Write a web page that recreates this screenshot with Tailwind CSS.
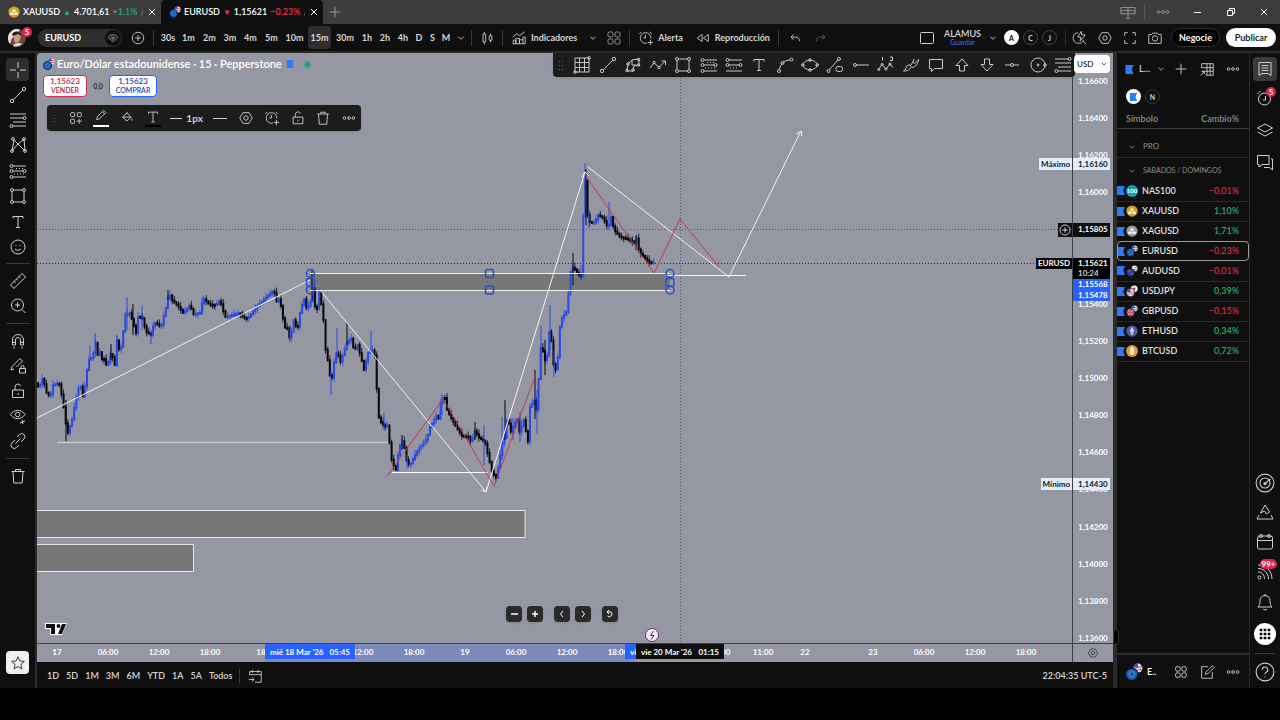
<!DOCTYPE html>
<html lang="es">
<head>
  <meta charset="UTF-8" />
  <meta name="viewport" content="width=device-width, initial-scale=1.0"/>
  <title>EURUSD 1,15621 −0.23% / ALAMUS</title>
  <script src="https://cdn.jsdelivr.net/npm/@tailwindcss/browser@4"></script>
</head>
<body class="bg-black text-[#d6d6d6] h-screen flex flex-col overflow-hidden font-['Lato','Noto_Sans',sans-serif] text-[9px] leading-3">

  <!-- icon set -->
  <svg class="hidden" fill="none">
    <symbol id="cross" viewBox="0 0 18 18"><path d="M9 1v6M9 11v6M1 9h6M11 9h6"/></symbol>
    <symbol id="line" viewBox="0 0 18 18"><circle cx="3" cy="15" r="1.7"/><circle cx="15" cy="3" r="1.7"/><path d="M4.2 13.8 13.8 4.2"/></symbol>
    <symbol id="fib" viewBox="0 0 18 18"><path d="M1 3h16M1 7h13M4 11h13M4 15h13"/><circle cx="15.5" cy="7" r="1.5"/><circle cx="2.5" cy="15" r="1.5"/></symbol>
    <symbol id="pattern" viewBox="0 0 18 18"><path d="M3 15 5 4l4 4 6-5 1 12-7-7-6 7"/><circle cx="3" cy="15" r="1.4"/><circle cx="4" cy="3" r="1.4"/><circle cx="15" cy="3" r="1.4"/><circle cx="16" cy="15" r="1.4"/></symbol>
    <symbol id="forecast" viewBox="0 0 18 18"><path d="M4 4h13M4 9h10M4 15h13"/><path d="M5 12h11M7 6.500h8" stroke-dasharray="1 2"/><circle cx="2.500" cy="4" r="1.500"/><circle cx="2.500" cy="9" r="1.500"/><circle cx="15.500" cy="9" r="1.500"/><circle cx="2.500" cy="15" r="1.500"/></symbol>
    <symbol id="short" viewBox="0 0 18 18"><path d="M4 4h13M4 9h10M1 15h16"/><path d="M5 12h8" stroke-dasharray="1 2"/><circle cx="2.500" cy="4" r="1.500"/><circle cx="2.500" cy="9" r="1.500"/><circle cx="15.500" cy="9" r="1.500"/></symbol>
    <symbol id="rect" viewBox="0 0 18 18"><path d="M4.500 3h9M4.500 15h9M3 4.500v9M15 4.500v9"/><circle cx="3" cy="3" r="1.500"/><circle cx="15" cy="3" r="1.500"/><circle cx="3" cy="15" r="1.500"/><circle cx="15" cy="15" r="1.500"/></symbol>
    <symbol id="text" viewBox="0 0 18 18"><path d="M4 5.500V3.500h10v2M9 3.500v11M7 14.500h4"/></symbol>
    <symbol id="smile" viewBox="0 0 18 18"><circle cx="9" cy="9" r="7"/><path d="M6.500 7.500h1M10.500 7.500h1M6 11c1.500 1.600 4.500 1.600 6 0"/></symbol>
    <symbol id="ruler" viewBox="0 0 18 18"><path d="m1.500 13 11.500-11.500 3.500 3.500L5 16.500zM5 9.500l1.500 1.500M7.500 7 9 8.500M10 4.500l1.500 1.500"/></symbol>
    <symbol id="zoomin" viewBox="0 0 18 18"><circle cx="8.500" cy="8" r="6"/><path d="m13 12.500 3.500 3.500M8.500 5.500v5M6 8h5"/></symbol>
    <symbol id="magnet" viewBox="0 0 18 18"><path d="M3.500 13V8a5.500 5.500 0 0 1 11 0v5h-3V8a2.500 2.500 0 0 0-5 0v5zM3.500 10.500h3M11.500 10.500h3M5 14.500v2M13 14.500v2"/></symbol>
    <symbol id="penlock" viewBox="0 0 18 18"><path d="m2 13 1-3.500 8-8 2.500 2.500-6 6M2 13l3-1M10.500 11.500h6v4.500h-6zM12 11.500V10a1.500 1.500 0 0 1 3 0v1.500"/></symbol>
    <symbol id="lock" viewBox="0 0 18 18"><path d="M3.500 8h11v7.500h-11zM6 8V5a3 3 0 0 1 5.800-1M9 11v2"/></symbol>
    <symbol id="eye" viewBox="0 0 18 18"><path d="M1.500 7.500c3.500-5.500 11-5.500 14.500 0-3.500 5.500-11 5.500-14.500 0zM11 16l5-2M13 13l1 4"/><circle cx="8.700" cy="7.500" r="2.300"/></symbol>
    <symbol id="link" viewBox="0 0 18 18"><path d="m8 5 2.500-2.500a3 3 0 0 1 4.500 4.500l-3 3M10 13l-2.500 2.500a3 3 0 0 1-4.500-4.500l3-3M6.500 11.500l5-5"/></symbol>
    <symbol id="trash" viewBox="0 0 18 18"><path d="M2.500 4.500h13M6.500 4.500v-2h5v2M4 4.500l.8 11.500h8.400L14 4.500"/></symbol>
    <symbol id="star" viewBox="0 0 18 18"><path d="m9 2 2.100 4.700 5 .5-3.800 3.400 1.200 5L9 13l-4.500 2.600 1.200-5L1.900 7.200l5-.5z"/></symbol>
    <symbol id="plus" viewBox="0 0 18 18"><path d="M9 3v12M3 9h12"/></symbol>
    <symbol id="pluscircle" viewBox="0 0 18 18"><circle cx="9" cy="9" r="6.500"/><path d="M9 5.500v7M5.500 9h7"/></symbol>
    <symbol id="chev" viewBox="0 0 18 18"><path d="m6 7.500 3 3 3-3"/></symbol>
    <symbol id="candles" viewBox="0 0 18 18"><path d="M4.500 4.500h3v9h-3zM6 2v2.500M6 13.500V16M11.500 6.500h3v5h-3zM13 4v2.500M13 11.500V14"/></symbol>
    <symbol id="indicators" viewBox="0 0 18 18"><path d="M2.500 15.500v-4h3v4M5.500 15.500v-6h4v6M9.500 15.500V11h4v4.500M13.500 11V8h2.500v7.500h-14M2 8l4.500-4 3 2.500L15.500 2"/></symbol>
    <symbol id="grid4" viewBox="0 0 18 18"><rect x="3" y="3" width="5" height="5" rx="1.500"/><rect x="10" y="3" width="5" height="5" rx="1.500"/><rect x="3" y="10" width="5" height="5" rx="1.500"/><rect x="10" y="10" width="5" height="5" rx="1.500"/></symbol>
    <symbol id="template" viewBox="0 0 18 18"><rect x="3" y="3" width="4.500" height="4.500" rx="1"/><rect x="10.500" y="3" width="4.500" height="4.500" rx="1"/><rect x="3" y="10.500" width="4.500" height="4.500" rx="1"/><path d="M12.500 10v5.500M10 12.500h5.500"/></symbol>
    <symbol id="alert" viewBox="0 0 18 18"><path d="M10 14.800A6 6 0 1 1 14.500 9.500M8.500 5.500V9H6M1.500 4.500l2.500-2.500M13 2l2.500 2.500M14 11v6M11 14h6"/></symbol>
    <symbol id="rewind" viewBox="0 0 18 18"><path d="M8 5v8L2.500 9zM15 5v8L9.500 9z"/></symbol>
    <symbol id="undo" viewBox="0 0 18 18"><path d="M7.500 5 4.500 8l3 3M4.500 8h6c2 0 3.500 1.500 3.500 4.500"/></symbol>
    <symbol id="redo" viewBox="0 0 18 18"><path d="m10.500 5 3 3-3 3M13.500 8h-6C5.500 8 4 9.500 4 12.500"/></symbol>
    <symbol id="window" viewBox="0 0 18 18"><rect x="2.500" y="3.500" width="13" height="11" rx="1"/></symbol>
    <symbol id="bolt" viewBox="0 0 18 18"><path d="M7 3a6 6 0 1 0 6 8M12.500 12.500 16 16M10.500 1.500 6.500 8h3.500l-1 4.500 6-7h-4z"/></symbol>
    <symbol id="hex" viewBox="0 0 18 18"><path d="M5.500 3h7L16 9l-3.500 6h-7L2 9z"/><circle cx="9" cy="9" r="2.500"/></symbol>
    <symbol id="full" viewBox="0 0 18 18"><path d="M3 6.500V3h3.500M11.500 3H15v3.500M15 11.500V15h-3.500M6.500 15H3v-3.500"/></symbol>
    <symbol id="camera" viewBox="0 0 18 18"><path d="M2 5h3.500l1-1.500h5l1 1.500H16v10H2z"/><circle cx="9" cy="9.500" r="3"/></symbol>
    <symbol id="dots" viewBox="0 0 18 18"><circle cx="4" cy="9" r="1.500"/><circle cx="9" cy="9" r="1.500"/><circle cx="14" cy="9" r="1.500"/></symbol>
    <symbol id="grip" viewBox="0 0 10 18"><path d="M3.500 5v9M6.500 5v9" stroke-dasharray="1 3"/></symbol>
    <symbol id="pencil" viewBox="0 0 18 18"><path d="m4 12 1-3.500 7-7L14.500 4l-7 7zM10.500 3 13 5.500"/></symbol>
    <symbol id="bucket" viewBox="0 0 18 18"><path d="m4 8 5-4.500 4.500 4.500-4.500 4.500zM9 3.500V2M4 8h9.500M14.500 9.500v2.500"/></symbol>
    <symbol id="gridtable" viewBox="0 0 18 18"><path d="M2 2h14v14H2zM6.500 2v14M11.500 2v14M2 6.500h14M2 11.500h14"/><circle cx="2" cy="16" r="1.300"/><circle cx="16" cy="2" r="1.300"/></symbol>
    <symbol id="brushshape" viewBox="0 0 18 18"><path d="M3 15 4 8l4-4 7-1v6l-5 1-1 5zM8 4v5h4"/><circle cx="3" cy="14.500" r="1.300"/><circle cx="4" cy="8" r="1.300"/><circle cx="14.500" cy="3.500" r="1.300"/><circle cx="9" cy="14" r="1.300"/><circle cx="14.500" cy="9" r="1.300"/></symbol>
    <symbol id="zigzag" viewBox="0 0 18 18"><path d="m1 12 4-5 5 4 6.500-6M12.500 5h4v4"/><circle cx="5" cy="6.500" r="1.200"/><circle cx="10" cy="11.500" r="1.200"/></symbol>
    <symbol id="curve" viewBox="0 0 18 18"><path d="M3.500 13.500C4.500 7.500 8 4.500 14 4"/><circle cx="3" cy="15" r="1.500"/><circle cx="6.500" cy="7" r="1.500"/><circle cx="15.500" cy="3.500" r="1.500"/></symbol>
    <symbol id="ellipse" viewBox="0 0 18 18"><ellipse cx="9" cy="9" rx="7" ry="4.800"/><circle cx="1.800" cy="9" r="1.300"/><circle cx="16.200" cy="9" r="1.300"/><circle cx="9" cy="4" r="1.300"/><circle cx="9" cy="14" r="1.300"/></symbol>
    <symbol id="linelock" viewBox="0 0 18 18"><path d="M3 14 12 4"/><circle cx="2.500" cy="15" r="1.500"/><circle cx="13" cy="3" r="1.500"/><rect x="10" y="10.500" width="6.500" height="5" rx="2"/></symbol>
    <symbol id="ray" viewBox="0 0 18 18"><circle cx="3" cy="9" r="1.500"/><path d="M4.500 9H17"/></symbol>
    <symbol id="elliott" viewBox="0 0 18 18"><path d="m1.500 13.500 3.500-5 4 4.500 4-5 3 3.500M5.500 1v3.500M13 1h2.500v3.500H13"/><circle cx="1.800" cy="13.500" r="1.100"/><circle cx="5.200" cy="8.500" r="1.100"/><circle cx="9" cy="13" r="1.100"/><circle cx="13" cy="8" r="1.100"/></symbol>
    <symbol id="brush" viewBox="0 0 18 18"><path d="M1.500 15c3 0 1.500-6 5.500-6 4 0 2.500 6-5.500 6zM8.500 9.500 11 6c1 2 3 1.500 5.500-2.500M10 11.500c3.500-.5 6-3.500 6.500-8M11 6l1-3"/></symbol>
    <symbol id="callout" viewBox="0 0 18 18"><path d="M2.500 3.500h13v9h-8l-3 3v-3h-2z"/></symbol>
    <symbol id="up" viewBox="0 0 18 18"><path d="m9 3 6 6.500h-3.500V15h-5V9.500H3z"/></symbol>
    <symbol id="down" viewBox="0 0 18 18"><path d="m9 15 6-6.500h-3.500V3h-5v5.500H3z"/></symbol>
    <symbol id="hline" viewBox="0 0 18 18"><circle cx="9" cy="9" r="1.500"/><path d="M2 9h5.500M10.500 9H16"/></symbol>
    <symbol id="circle" viewBox="0 0 18 18"><circle cx="9" cy="9" r="7"/><circle cx="9" cy="9" r="1"/><circle cx="16" cy="9" r="1.300"/></symbol>
    <symbol id="fibx" viewBox="0 0 18 18"><path d="M1 3h13M1 7h16M4 11h13M4 15h13"/><circle cx="15.500" cy="3" r="1.500"/><circle cx="2.500" cy="15" r="1.500"/></symbol>
    <symbol id="list" viewBox="0 0 18 18"><path d="M3 2.500h12v13l-3-2H6l-3 2zM5.500 5.500h7M5.500 8h7M5.500 10.500h7"/></symbol>
    <symbol id="clock" viewBox="0 0 18 18"><circle cx="8.500" cy="10" r="6"/><path d="M9.500 7v4H7M1.500 5l3-3"/></symbol>
    <symbol id="layers" viewBox="0 0 18 18"><path d="m9 3 7.500 4L9 11 1.500 7zM1.500 11 9 15l7.500-4"/></symbol>
    <symbol id="chat" viewBox="0 0 18 18"><path d="M1.500 2.500h11.500v9H6l-3 2.500v-2.500H1.500zM15 6h1.500v11l-3-2.500H8"/></symbol>
    <symbol id="radar" viewBox="0 0 18 18"><circle cx="9" cy="9" r="8"/><circle cx="9" cy="9" r="4.500"/><path d="m8.500 10 5.500-5"/><circle cx="9" cy="9.500" r="1"/></symbol>
    <symbol id="peak" viewBox="0 0 18 18"><path d="m9 2 4.500 7-3 2-2-3-4 2zM3 12l-2 4h16l-2-4"/></symbol>
    <symbol id="calendar" viewBox="0 0 18 18"><rect x="1.500" y="3" width="15" height="13" rx="2"/><path d="M1.500 7.500h15"/><circle cx="5" cy="3" r="1.500"/><circle cx="13" cy="3" r="1.500"/></symbol>
    <symbol id="feed" viewBox="0 0 18 18"><circle cx="3.500" cy="14.500" r="1.500"/><path d="M2 9c4 0 6.500 3 6.500 7M2 5.500c6 0 10.500 4.500 10.500 10.500M2 2c8 0 14 6 14 14"/></symbol>
    <symbol id="bell" viewBox="0 0 18 18"><path d="M2 14c1.500-1.500 2-3 2-6.500a5 5 0 0 1 10 0c0 3.500.5 5 2 6.500zM7 16c1 1.200 3 1.200 4 0M9 2.500V1"/></symbol>
    <symbol id="apps" viewBox="0 0 18 18"><path d="M3 3h3v3H3zM7.500 3h3v3h-3zM12 3h3v3h-3zM3 7.500h3v3H3zM7.500 7.500h3v3h-3zM12 7.500h3v3h-3zM3 12h3v3H3zM7.500 12h3v3h-3zM12 12h3v3h-3z" fill="currentColor" stroke="none"/></symbol>
    <symbol id="help" viewBox="0 0 18 18"><circle cx="9" cy="9" r="8"/><path d="M6.500 7a2.500 2.500 0 1 1 3.500 2.300c-.8.400-1 .8-1 1.700M9 13v1"/></symbol>
    <symbol id="goto" viewBox="0 0 18 18"><path d="M3 8V4h13v12H9M3 7.500h13M6 2v3.500M12.500 2v3.500M2 13h6M5.500 10.500 8 13l-2.500 2.500"/></symbol>
    <symbol id="tablein" viewBox="0 0 18 18"><path d="M3 8V3h13v13H8M3 7.500h13M9 3v13M12.500 3v13M3 11.500h13M2 16l4-4M3 12h3v3"/></symbol>
    <symbol id="edit" viewBox="0 0 18 18"><path d="M10 3H3v13h12V9M7 11.500 8 9l7-7 2 2-7 7z"/></symbol>
    <symbol id="flag" viewBox="0 0 9 10"><path d="M0 0h9L7 5l2 5H0z" fill="#2f7bf5" stroke="none"/></symbol>
    <symbol id="gem" viewBox="0 0 18 18"><path d="M5 4.500h8l3 3.500-7 6.500L2 8zM6.500 8h5L9 11.500z"/></symbol>
    <symbol id="monitor" viewBox="0 0 18 18"><path d="M1 4h16v7H1zM1 7.500h16M9 4v12M6 16h6"/></symbol>
    <symbol id="eu" viewBox="0 0 16 16"><circle cx="11.500" cy="4.500" r="4" fill="#e6e6ee" stroke="none"/><path d="M11 3.500h4.500M11 6h4.500" stroke="#d33a55"/><path d="M7.500 4a4 4 0 0 1 4-3.500v4z" fill="#3752b5" stroke="none"/><circle cx="6" cy="10" r="5.500" fill="#1a5fb4" stroke="#101010"/><circle cx="6" cy="10" r="2.500" fill="none" stroke="#6fb1e8" stroke-dasharray="1 1"/></symbol>
    <symbol id="au" viewBox="0 0 16 16"><circle cx="11.500" cy="4.500" r="4" fill="#e6e6ee" stroke="none"/><path d="M11 3.500h4.500M11 6h4.500" stroke="#d33a55"/><circle cx="6" cy="10" r="5.500" fill="#243c9a" stroke="#101010"/><path d="M2 8h5M4.500 6v5" stroke="#e8455a"/><circle cx="8" cy="12" r=".8" fill="#fff" stroke="none"/></symbol>
    <symbol id="jp" viewBox="0 0 16 16"><circle cx="11" cy="5" r="4.500" fill="#f4f4f4" stroke="none"/><circle cx="11" cy="5" r="1.600" fill="#d7263d" stroke="none"/><circle cx="6" cy="10" r="5.500" fill="#ececf2" stroke="#101010"/><path d="M3 9.500h8M2 12h9" stroke="#d33a55"/><path d="M1 9.500a5 5 0 0 1 5-4.500v4.500z" fill="#3752b5" stroke="none"/></symbol>
    <symbol id="gb" viewBox="0 0 16 16"><circle cx="11.500" cy="4.500" r="4" fill="#e6e6ee" stroke="none"/><path d="M11 3.500h4.500M11 6h4.500" stroke="#d33a55"/><path d="M7.500 4a4 4 0 0 1 4-3.500v4z" fill="#3752b5" stroke="none"/><circle cx="6" cy="10" r="5.500" fill="#5f6fb0" stroke="#101010"/><path d="m2.500 6.500 7 7M9.500 6.500l-7 7" stroke="#e8e8f0"/><path d="M6 5v10M1 10h10" stroke="#e8455a" stroke-width="1.500"/></symbol>
    <symbol id="gold" viewBox="0 0 16 16"><circle cx="8" cy="8" r="7.500" fill="#d3a020" stroke="none"/><path d="M6.500 4.500h3l1 3h-5zM3.500 8.500h3.500l.8 3H2.700zM9 8.500h3.500l.8 3H8.200z" fill="#fff" stroke="none"/></symbol>
    <symbol id="silver" viewBox="0 0 16 16"><circle cx="8" cy="8" r="7.500" fill="#9a9ca3" stroke="none"/><path d="M6.500 4.500h3l1 3h-5zM3.500 8.500h3.500l.8 3H2.700zM9 8.500h3.500l.8 3H8.200z" fill="#fff" stroke="none"/></symbol>
    <symbol id="eth" viewBox="0 0 16 16"><circle cx="8" cy="8" r="7.500" fill="#4d5aa8" stroke="none"/><path d="m8 2.500 3 5.500-3 2-3-2zM5 9l3 2 3-2-3 4.500z" fill="#dfe4ff" stroke="none"/></symbol>
  </svg>

  <!-- window tabs -->
  <header class="h-6 shrink-0 bg-[#3d3d3d] flex items-stretch font-semibold text-white whitespace-nowrap">
    <div class="w-[161px] flex items-center gap-[3px] pl-2 pr-[3px]">
      <svg class="size-3 shrink-0"><use href="#gold"/></svg>
      <span>XAUUSD</span><span class="text-[#2da77d] text-[8px]">▲</span><span>4.701,61</span><span class="text-[#2da77d]">+1.1%</span><span class="min-w-0 overflow-hidden text-[#8a8a8a] font-normal">/ <span class="text-[#5c5c5c]">A</span></span>
      <button aria-label="Cerrar XAUUSD" class="ml-auto shrink-0"><svg class="size-3 stroke-white" viewBox="0 0 12 12"><path d="m3 3 6 6M9 3 3 9"/></svg></button>
    </div>
    <div class="w-[162px] flex items-center gap-[3px] pl-2 pr-[3px] bg-[#0f0f0f] rounded-t">
      <svg class="size-3 shrink-0 fill-none"><use href="#eu"/></svg>
      <span>EURUSD</span><span class="text-[#f0304f] text-[8px]">▼</span><span>1,15621</span><span class="text-[#f0304f]">−0.23%</span><span class="min-w-0 overflow-hidden text-[#8a8a8a] font-normal">/ <span class="text-[#444]">A</span></span>
      <button aria-label="Cerrar EURUSD" class="ml-auto shrink-0"><svg class="size-3 stroke-white" viewBox="0 0 12 12"><path d="m3 3 6 6M9 3 3 9"/></svg></button>
    </div>
    <button aria-label="Nueva pestaña" class="px-1"><svg class="size-4 stroke-[#a0a0a0]"><use href="#plus"/></svg></button>
    <div class="ml-auto flex items-center stroke-[#999] fill-none">
      <button aria-label="Pantallas" class="w-8 flex justify-center"><svg class="size-4"><use href="#monitor"/></svg></button>
      <span class="h-4 w-px bg-[#5a5a5a]"></span>
      <button aria-label="Más" class="w-9 flex justify-center"><svg class="size-4"><use href="#dots"/></svg></button>
      <button aria-label="Minimizar" class="w-[33px] flex justify-center"><svg class="size-3 stroke-white" viewBox="0 0 12 12"><path d="M2 6.500h7"/></svg></button>
      <button aria-label="Restaurar" class="w-[33px] flex justify-center"><svg class="size-3 stroke-white" viewBox="0 0 12 12"><path fill="none" d="M2.500 4.500h5v5h-5zM4.500 4.500v-2h5v5h-2"/></svg></button>
      <button aria-label="Cerrar" class="w-[33px] flex justify-center"><svg class="size-3 stroke-white" viewBox="0 0 12 12"><path d="m3 3 6 6M9 3 3 9"/></svg></button>
    </div>
  </header>

  <!-- main toolbar -->
  <nav class="h-[27px] shrink-0 bg-[#0f0f0f] flex items-center font-bold stroke-[#d0d0d0] fill-none">
    <button aria-label="Menú" class="relative ml-2 size-[18px] rounded-full">
      <svg class="size-[18px]" viewBox="0 0 18 18" stroke="none"><circle cx="9" cy="9" r="9" fill="#6b4a3c"/><path d="M0 9a9 9 0 0 1 12-8.500L8 7l-4 2-2 6A9 9 0 0 1 0 9z" fill="#e8e0d8"/><path d="M5 6c2-3 7-3 8 1l-2 6-4 1z" fill="#c99b83"/><path d="M4 5c3-4 9-3 10 2l-4-2-5 2z" fill="#2a1c1a"/><path d="M5 17c1-3 6-4 9-2a9 9 0 0 1-9 2z" fill="#ddd"/></svg>
      <span class="absolute -top-0.5 left-3.5 size-2.5 rounded-full bg-[#e0234e] text-white text-[8px] leading-[10px]">5</span>
    </button>
    <button class="ml-3 w-[84px] h-[18px] pl-[7px] pr-px rounded-full bg-[#2e2e2e] flex items-center justify-between text-white"><span>EURUSD</span><span class="size-4 rounded-full bg-[#0f0f0f] flex items-center justify-center"><svg class="size-3"><use href="#gem"/></svg></span></button>
    <button aria-label="Comparar" class="w-[31px] flex justify-center"><svg class="size-4"><use href="#pluscircle"/></svg></button>
    <span class="h-4 w-px bg-[#3a3a3a] mr-1"></span>
    <button class="w-5">30s</button>
    <button class="w-[21px]">1m</button>
    <button class="w-[21px]">2m</button>
    <button class="w-5">3m</button>
    <button class="w-[21px]">4m</button>
    <button class="w-[21px]">5m</button>
    <button class="w-[25px]">10m</button>
    <button class="w-[23px] h-[23px] mx-px rounded bg-[#2e2e2e]">15m</button>
    <button class="w-[26px]">30m</button>
    <button class="w-[18px]">1h</button>
    <button class="w-[18px]">2h</button>
    <button class="w-[18px]">4h</button>
    <button class="w-[14px]">D</button>
    <button class="w-[13px]">S</button>
    <button class="w-[14px]">M</button>
    <button aria-label="Más intervalos"><svg class="size-4"><use href="#chev"/></svg></button>
    <span class="h-4 w-px bg-[#3a3a3a] ml-0.5"></span>
    <button aria-label="Velas" class="w-[30px] flex justify-center"><svg class="size-4"><use href="#candles"/></svg></button>
    <span class="h-4 w-px bg-[#3a3a3a]"></span>
    <button class="ml-2 flex items-center gap-1"><svg class="size-4"><use href="#indicators"/></svg>Indicadores</button>
    <button aria-label="Favoritos" class="ml-2"><svg class="size-4"><use href="#chev"/></svg></button>
    <button aria-label="Plantillas" class="ml-1 mr-1.5"><svg class="size-[18px] stroke-[#999]"><use href="#grid4"/></svg></button>
    <span class="h-4 w-px bg-[#3a3a3a]"></span>
    <button class="ml-2 flex items-center gap-1"><svg class="size-4"><use href="#alert"/></svg>Alerta</button>
    <button class="ml-3 flex items-center gap-1"><svg class="size-4"><use href="#rewind"/></svg>Reproducción</button>
    <span class="h-4 w-px bg-[#3a3a3a] ml-2"></span>
    <button aria-label="Deshacer" class="ml-2"><svg class="size-4"><use href="#undo"/></svg></button>
    <button aria-label="Rehacer" class="ml-2.5"><svg class="size-4 stroke-[#666]"><use href="#redo"/></svg></button>

    <div class="ml-auto flex items-center pr-1">
      <button aria-label="Diseño" class="mr-2"><svg class="size-[18px]"><use href="#window"/></svg></button>
      <button class="flex flex-col items-center font-semibold leading-[10px]">ALAMUS<span class="text-[7px] leading-[7px] text-[#2962ff]">Guardar</span></button>
      <button aria-label="Diseños" class="ml-1 mr-px"><svg class="size-4"><use href="#chev"/></svg></button>
      <button class="size-[15px] rounded-full bg-white text-black text-[7px] mx-0.5">A</button>
      <button class="size-[15px] rounded-full border border-[#444] text-[7px] mx-0.5">C</button>
      <button class="size-[15px] rounded-full border border-[#444] text-[7px] mx-0.5">J</button>
      <span class="h-4 w-px bg-[#2a2a2a] mx-1.5"></span>
      <button aria-label="Búsqueda rápida" class="w-[25px]"><svg class="size-4"><use href="#bolt"/></svg></button>
      <button aria-label="Ajustes" class="w-[25px]"><svg class="size-4"><use href="#hex"/></svg></button>
      <button aria-label="Pantalla completa" class="w-[25px]"><svg class="size-4"><use href="#full"/></svg></button>
      <button aria-label="Captura" class="w-6"><svg class="size-4"><use href="#camera"/></svg></button>
      <button class="h-[19px] w-[49px] rounded-full bg-black border border-[#2e2e2e] text-white text-[9px]">Negocie</button>
      <button class="h-[19px] w-[50px] rounded-full bg-white text-[#222] text-[9px] ml-1.5">Publicar</button>
    </div>
  </nav>

  <main class="flex-1 min-h-0 flex bg-[#2b2b2b] pt-0.5">
    <!-- drawing tools -->
    <aside class="w-[35px] mr-0.5 bg-[#0f0f0f] flex flex-col items-center pt-[5px] pb-3.5 stroke-[#cfcfcf] fill-none">
      <button aria-label="Cursor" class="size-[23px] mb-px rounded bg-[#2e2e2e] flex items-center justify-center"><svg class="size-[18px]"><use href="#cross"/></svg></button>
      <button aria-label="Línea" class="h-[25px]"><svg class="size-[18px]"><use href="#line"/></svg></button>
      <button aria-label="Fibonacci" class="h-[25px]"><svg class="size-[18px]"><use href="#fib"/></svg></button>
      <button aria-label="Patrones" class="h-[26px]"><svg class="size-[18px]"><use href="#pattern"/></svg></button>
      <button aria-label="Proyección" class="h-[25px]"><svg class="size-[18px]"><use href="#forecast"/></svg></button>
      <button aria-label="Rectángulo" class="h-[26px]"><svg class="size-[18px]"><use href="#rect"/></svg></button>
      <button aria-label="Texto" class="h-[25px]"><svg class="size-[18px]"><use href="#text"/></svg></button>
      <button aria-label="Iconos" class="h-[25px]"><svg class="size-[18px]"><use href="#smile"/></svg></button>
      <span class="h-px w-6 bg-[#3a3a3a] my-1"></span>
      <button aria-label="Medir" class="h-[25px]"><svg class="size-[18px]"><use href="#ruler"/></svg></button>
      <button aria-label="Acercar" class="h-[26px]"><svg class="size-[18px]"><use href="#zoomin"/></svg></button>
      <span class="h-px w-6 bg-[#3a3a3a] my-1"></span>
      <button aria-label="Imán" class="h-[25px]"><svg class="size-[18px]"><use href="#magnet"/></svg></button>
      <button aria-label="Modo dibujo" class="h-[25px]"><svg class="size-[18px]"><use href="#penlock"/></svg></button>
      <button aria-label="Bloquear" class="h-[25px]"><svg class="size-[18px]"><use href="#lock"/></svg></button>
      <button aria-label="Ocultar" class="h-[25px]"><svg class="size-[18px]"><use href="#eye"/></svg></button>
      <button aria-label="Sincronizar" class="h-[26px]"><svg class="size-[18px]"><use href="#link"/></svg></button>
      <span class="h-px w-6 bg-[#3a3a3a] my-1"></span>
      <button aria-label="Eliminar" class="h-[25px]"><svg class="size-[18px]"><use href="#trash"/></svg></button>
      <button aria-label="Favoritos" class="mt-auto size-[23px] rounded bg-[#f0f0f0] stroke-[#222] flex items-center justify-center"><svg class="size-4"><use href="#star"/></svg></button>
    </aside>

    <section class="flex-1 min-w-0 flex flex-col">
      <div class="relative flex-1 min-h-0 flex bg-[#9598a2] rounded-tl text-white font-bold">
        <svg id="chart" class="flex-1 min-w-0 h-full" viewBox="37 53 1035 590" preserveAspectRatio="xMinYMin slice" fill="none">
          <g stroke="#555863" stroke-dasharray="1 2"><path d="M37 229.500h1035M680.500 53v590"/><path d="M37 263.500h1035" stroke="#2a2d38"/></g>
          <g fill="#777777" stroke="#e8e8ea">
            <path d="M36 510.500h489v27H36zM36 544.500h157.500v27H36z"/>
            <path d="M310 273h360v17H310z" stroke="none"/>
          </g>
          <path d="M57 442.500h333" stroke="#c6c8ce" stroke-width="1.500"/>
          <path d="M392 472.500h96" stroke="#fff"/>
          <g id="candles-layer"></g>
          <g stroke="#f2f2f5">
            <path d="M310 273.500h360M310 290.500h360M665 275.500h81"/>
            <path d="M37 418 310 280M320 290 486 492 585 172M481 490l5 2 1-5M582 177l3-5 4 4"/>
            <path d="M588 167 729 277 801 131M796 134l5-3 1 5"/>
          </g>
          <path d="m387 476 56-77 51 87 42-112M585 175l69 98 26-54 39 48" stroke="#c23a52"/>
          <g stroke="#2450c8" stroke-width="1.500">
            <circle cx="310.500" cy="273.500" r="4"/><rect x="306.500" y="278.500" width="8" height="8" rx="2"/><circle cx="310.500" cy="290" r="4"/>
            <circle cx="670" cy="273.500" r="4"/><rect x="666" y="278.500" width="8" height="8" rx="2"/><circle cx="670" cy="290" r="4"/>
            <rect x="485.500" y="269.500" width="8" height="8" rx="2"/><rect x="485.500" y="286" width="8" height="8" rx="2"/>
          </g>
          <path d="M45 623h22l-5 12h-12v-6h-5z" fill="#fff"/>
          <path d="M46 624h9v10h-4v-6h-5zM62 624h4l-4 10h-4z" fill="#111"/><circle cx="58.500" cy="626" r="2" fill="#111"/>
          <circle cx="652" cy="635" r="6.500" fill="#f8eafb" stroke="#6a2a78"/><path d="m653.500 631-3 4.500h3.500l-3 4" stroke="#5a1a68"/>
        </svg>

        <!-- price axis -->
        <div class="w-[41px] border-l border-[#3c3f48] flex flex-col justify-between pl-[5px] pt-[23px] text-[8px] leading-[10px]">
          <span>1,16600</span><span>1,16400</span><span>1,16200</span><span>1,16000</span><span>1,15800</span><span>1,15600</span><span>1,15400</span><span>1,15200</span><span>1,15000</span><span>1,14800</span><span>1,14600</span><span>1,14400</span><span>1,14200</span><span>1,14000</span><span>1,13800</span><span>1,13600</span>
        </div>
        <div class="absolute top-0.5 right-[3px] z-10 flex items-center">
          <select aria-label="Moneda" class="appearance-none w-9 h-[18px] px-[3px] rounded-sm bg-white text-black text-[8px] font-normal"><option>USD</option></select>
          <svg class="absolute right-0 size-3 stroke-black fill-none pointer-events-none"><use href="#chev"/></svg>
        </div>
        <div class="absolute right-[3px] top-[105px] flex gap-px text-[8px] leading-3 text-[#131722]"><span class="bg-[#e4edfb] px-0.5">Máximo</span><span class="bg-[#e4edfb] w-[37px] pl-[5px]">1,16160</span></div>
        <div class="absolute right-[3px] top-[170px] flex gap-px text-[8px] leading-[13px]"><span class="bg-[#0f0f0f] w-3.5 flex items-center justify-center"><svg class="size-3.5 stroke-white fill-none"><use href="#pluscircle"/></svg></span><span class="bg-[#0f0f0f] w-[37px] pl-[5px]">1,15805</span></div>
        <div class="absolute right-[3px] top-[205px] flex items-start gap-px text-[8px] leading-[11px]"><span class="bg-black px-0.5">EURUSD</span>
          <div class="w-[37px] bg-[#2962ff]"><div class="bg-black pl-[5px] pb-px leading-[10px]">1,15621<br><span class="text-[#ccc]">10:24</span></div><div class="pl-[5px]">1,15568<br>1,15478</div></div></div>
        <div class="absolute right-[3px] top-[425px] flex gap-px text-[8px] leading-3 text-[#131722]"><span class="bg-[#e4edfb] px-0.5">Mínimo</span><span class="bg-[#e4edfb] w-[37px] pl-[5px]">1,14430</span></div>

        <!-- legend and order buttons -->
        <div class="absolute left-1.5 top-1 flex flex-col items-start">
          <div class="flex items-center gap-0.5 text-[11px] leading-[14px] font-semibold"><svg class="size-3 fill-none"><use href="#eu"/></svg><span>Euro/Dólar estadounidense · 15 · Pepperstone</span><svg class="w-[9px] h-2 ml-0.5"><use href="#flag"/></svg><span class="size-[5px] ml-2 rounded-full bg-[#22a06b] ring-2 ring-[#22a06b]/30"></span></div>
          <div class="flex items-center mt-1 text-[7px] font-semibold">
            <button class="w-11 h-[22px] rounded bg-white border border-[#d0304f] text-[#c0203f] leading-[9px]"><span class="text-[8px]">1,15623</span><br>VENDER</button>
            <span class="w-[22px] text-center text-[#222]">0,0</span>
            <button class="w-12 h-[22px] rounded bg-white border border-[#2962ff] text-[#2646b8] leading-[9px]"><span class="text-[8px]">1,15623</span><br>COMPRAR</button>
          </div>
          <div class="ml-1 mt-2 w-[314px] h-[26px] rounded bg-[#1c1c1c] shadow flex items-center justify-between pl-[3px] pr-1 stroke-[#d0d0d0] fill-none">
            <svg class="w-2 h-[18px] stroke-[#666]"><use href="#grip"/></svg>
            <button aria-label="Plantilla"><svg class="size-4"><use href="#template"/></svg></button>
            <button aria-label="Color de línea" class="border-b-2 border-white"><svg class="size-4"><use href="#pencil"/></svg></button>
            <button aria-label="Relleno"><svg class="size-4"><use href="#bucket"/></svg></button>
            <button aria-label="Color de texto" class="border-b-2 border-black"><svg class="size-4"><use href="#text"/></svg></button>
            <button class="flex items-center gap-1 text-[10px] text-[#d0d0d0]"><span class="w-3 h-px bg-[#d0d0d0]"></span>1px</button>
            <button aria-label="Estilo" class="w-4 h-3 flex items-center"><span class="w-3.5 h-px bg-[#d0d0d0]"></span></button>
            <button aria-label="Ajustes"><svg class="size-4"><use href="#hex"/></svg></button>
            <button aria-label="Alerta"><svg class="size-4"><use href="#alert"/></svg></button>
            <button aria-label="Bloquear"><svg class="size-4"><use href="#lock"/></svg></button>
            <button aria-label="Eliminar"><svg class="size-4"><use href="#trash"/></svg></button>
            <button aria-label="Más"><svg class="size-4"><use href="#dots"/></svg></button>
          </div>
        </div>

        <!-- favourite drawing tools -->
        <div class="absolute right-[38px] top-0 w-[522px] h-6 rounded-b bg-[#1c1c1c] shadow flex items-center justify-between pl-[3px] pr-[3px] stroke-[#c8c8c8] fill-none">
          <svg class="w-2.5 h-[18px] stroke-[#666]"><use href="#grip"/></svg>
          <svg class="size-[18px]"><use href="#gridtable"/></svg>
          <svg class="size-[18px]"><use href="#line"/></svg>
          <svg class="size-[18px]"><use href="#brushshape"/></svg>
          <svg class="size-[18px]"><use href="#zigzag"/></svg>
          <svg class="size-[18px]"><use href="#rect"/></svg>
          <svg class="size-[18px]"><use href="#forecast"/></svg>
          <svg class="size-[18px]"><use href="#short"/></svg>
          <svg class="size-[18px]"><use href="#text"/></svg>
          <svg class="size-[18px]"><use href="#curve"/></svg>
          <svg class="size-[18px]"><use href="#ellipse"/></svg>
          <svg class="size-[18px]"><use href="#linelock"/></svg>
          <svg class="size-[18px]"><use href="#ray"/></svg>
          <svg class="size-[18px]"><use href="#elliott"/></svg>
          <svg class="size-[18px]"><use href="#brush"/></svg>
          <svg class="size-[18px]"><use href="#callout"/></svg>
          <svg class="size-[18px]"><use href="#up"/></svg>
          <svg class="size-[18px]"><use href="#down"/></svg>
          <svg class="size-[18px]"><use href="#hline"/></svg>
          <svg class="size-[18px]"><use href="#circle"/></svg>
          <svg class="size-[18px]"><use href="#fibx"/></svg>
        </div>

        <!-- zoom and scroll buttons -->
        <div class="absolute left-[469px] bottom-[21px] flex gap-[5px] stroke-white fill-none">
          <button aria-label="Alejar" class="size-4 rounded-sm bg-[#2a2a2a] shadow"><svg viewBox="0 0 16 16"><path d="M5 8h7" stroke-width="1.500"/></svg></button>
          <button aria-label="Acercar" class="size-4 rounded-sm bg-[#2a2a2a] shadow"><svg viewBox="0 0 16 16"><path d="M5 8h6M8 5v6" stroke-width="1.500"/></svg></button>
          <button aria-label="Atrás" class="size-4 rounded-sm bg-[#2a2a2a] shadow ml-1.5"><svg viewBox="0 0 16 16"><path d="M9 5 6.500 8 9 11"/></svg></button>
          <button aria-label="Adelante" class="size-4 rounded-sm bg-[#2a2a2a] shadow"><svg viewBox="0 0 16 16"><path d="m7 5 2.500 3L7 11"/></svg></button>
          <button aria-label="Restablecer" class="size-4 rounded-sm bg-[#2a2a2a] shadow ml-1.5"><svg viewBox="0 0 16 16"><path d="M5 6h4a2.500 2.500 0 1 1-3.500 4M7 4 5 6l2 2"/></svg></button>
        </div>
      </div>

      <!-- time axis -->
      <div class="relative h-[19px] border-t border-[#3c3f48] bg-[#9598a2] flex text-white font-bold">
        <svg class="flex-1 min-w-0 h-full" viewBox="37 644 1035 18" preserveAspectRatio="xMinYMin slice">
          <path d="M265 644h370v18H265z" fill="#7b8ab8"/>
          <g id="hours" class="text-[8px]" fill="#fff" text-anchor="middle"></g>
        </svg>
        <button aria-label="Ajustes de escala" class="w-[41px] border-l border-[#3c3f48] flex items-center justify-center"><svg class="size-3 stroke-[#222] fill-none"><use href="#hex"/></svg></button>
        <div class="absolute left-[228px] top-0 h-[15px] w-[90px] bg-[#2962ff] flex items-center justify-between px-[5px] text-[8px] leading-4 whitespace-nowrap"><span>mié 18 Mar '26</span><span>05:45</span></div>
        <div class="absolute left-[588px] top-0 h-[15px] w-[99px] flex text-[8px] leading-4 whitespace-nowrap"><span class="w-[11px] bg-[#2962ff] pl-[5px] overflow-hidden">vi</span><div class="w-[88px] bg-[#0f0f0f] flex justify-between px-[5px]"><span>vie 20 Mar '26</span><span>01:15</span></div></div>
      </div>

      <!-- date ranges -->
      <div class="h-[26px] bg-[#0f0f0f] flex items-center gap-[7px] pl-2.5 pr-1.5 pt-px font-semibold">
        <button>1D</button><button>5D</button><button>1M</button><button>3M</button><button>6M</button><button>YTD</button><button>1A</button><button>5A</button><button>Todos</button>
        <span class="h-3.5 w-px bg-[#3a3a3a]"></span>
        <button aria-label="Ir a"><svg class="size-4 stroke-[#cfcfcf] fill-none"><use href="#goto"/></svg></button>
        <button class="ml-auto">22:04:35 UTC-5</button>
      </div>
    </section>

    <!-- watchlist -->
    <section class="relative w-[133px] ml-1 bg-[#0f0f0f] border-r border-[#2a2a2a] flex flex-col font-semibold">
      <div class="flex items-center pl-2 pr-2 pt-2 stroke-[#cfcfcf] fill-none">
        <button class="flex items-center gap-1"><svg class="w-[9px] h-[9px]"><use href="#flag"/></svg><span class="ml-px">L...</span><svg class="size-3.5"><use href="#chev"/></svg></button>
        <button aria-label="Añadir símbolo" class="ml-auto"><svg class="size-4"><use href="#plus"/></svg></button>
        <button aria-label="Vista" class="ml-2.5"><svg class="size-4"><use href="#tablein"/></svg></button>
        <button aria-label="Más" class="ml-2.5"><svg class="size-4"><use href="#dots"/></svg></button>
      </div>
      <div class="flex gap-1 pl-[9px] mt-3">
        <button aria-label="Lista azul" class="size-[15px] rounded-full bg-white flex items-center justify-center"><svg class="w-[9px] h-2"><use href="#flag"/></svg></button>
        <button class="size-[15px] rounded-full border border-[#3a3a3a] text-[7px]">N</button>
      </div>
      <table class="w-full mt-[9px] border-collapse">
        <thead class="text-[#8c8c8c]">
          <tr class="border-b border-[#3a3a3a] align-top h-[15px]"><th class="text-left pl-[9px] font-semibold" colspan="2">Símbolo</th><th class="text-right pr-2.5 font-semibold">Cambio%</th></tr>
          <tr class="h-[29px] border-b border-[#2a2a2a] text-[8px]"><th class="text-left pt-2 pl-2" colspan="3"><svg class="size-3.5 inline stroke-[#999] fill-none"><use href="#chev"/></svg><span class="ml-1 font-normal">PRO</span></th></tr>
          <tr class="h-6 text-[7px]"><th class="text-left pt-1 pl-2" colspan="3"><svg class="size-3.5 inline stroke-[#999] fill-none"><use href="#chev"/></svg><span class="ml-1 font-normal">SABADOS / DOMINGOS</span></th></tr>
        </thead>
        <tbody id="watchlist"></tbody>
      </table>
      <button aria-label="Ocultar panel" class="absolute -left-1 bottom-[43px] w-1.5 h-4 rounded bg-black border border-[#333]"></button>
      <div class="mt-auto h-[35px] border-t-2 border-[#2b2b2b] flex items-center pl-2 pr-2 stroke-[#cfcfcf] fill-none">
        <svg class="size-[18px]"><use href="#eu"/></svg><span class="ml-1 text-white">E..</span>
        <button aria-label="Detalles" class="ml-auto"><svg class="size-4"><use href="#grid4"/></svg></button>
        <button aria-label="Nota" class="ml-2.5"><svg class="size-4"><use href="#edit"/></svg></button>
        <button aria-label="Más" class="ml-2.5"><svg class="size-4"><use href="#dots"/></svg></button>
      </div>
    </section>

    <!-- right rail -->
    <aside class="w-[30px] bg-[#0f0f0f] flex flex-col items-center pt-1 pb-1.5 stroke-[#cfcfcf] fill-none">
      <button aria-label="Lista" class="size-6 rounded bg-[#3a3a3a] flex items-center justify-center"><svg class="size-[18px]"><use href="#list"/></svg></button>
      <button aria-label="Alertas" class="relative mt-2"><svg class="size-[18px]"><use href="#clock"/></svg><span class="absolute -top-0.5 left-2.5 size-2.5 rounded-full bg-[#e0234e] text-white text-[8px] leading-[10px] font-bold">5</span></button>
      <button aria-label="Capas" class="mt-3.5"><svg class="size-[18px]"><use href="#layers"/></svg></button>
      <button aria-label="Chat" class="mt-3.5"><svg class="size-[18px]"><use href="#chat"/></svg></button>
      <button aria-label="Screener" class="mt-auto"><svg class="size-5"><use href="#radar"/></svg></button>
      <button aria-label="Pine" class="mt-2.5"><svg class="size-[18px]"><use href="#peak"/></svg></button>
      <button aria-label="Calendario" class="mt-3"><svg class="size-[18px]"><use href="#calendar"/></svg></button>
      <button aria-label="Noticias" class="relative mt-3"><svg class="size-[18px]"><use href="#feed"/></svg><span class="absolute -top-1 left-1 w-[17px] h-2.5 rounded-full bg-[#e0234e] text-white text-[8px] leading-[10px] font-bold">99+</span></button>
      <button aria-label="Notificaciones" class="mt-3"><svg class="size-[18px]"><use href="#bell"/></svg></button>
      <button aria-label="Productos" class="mt-3 size-[22px] rounded-full bg-white text-black flex items-center justify-center"><svg class="size-4"><use href="#apps"/></svg></button>
      <span class="h-px w-5 bg-[#3a3a3a] my-2"></span>
      <button aria-label="Ayuda"><svg class="size-5"><use href="#help"/></svg></button>
    </aside>
  </main>
  <div class="h-8 shrink-0 bg-black"></div>

  <script>
    const symbols = [
      ['NAS100', '−0,01%', 'nas'], ['XAUUSD', '1,10%', 'gold'], ['XAGUSD', '1,71%', 'silver'],
      ['EURUSD', '−0,23%', 'eu'], ['AUDUSD', '−0,01%', 'au'], ['USDJPY', '0,39%', 'jp'],
      ['GBPUSD', '−0,15%', 'gb'], ['ETHUSD', '0,34%', 'eth'], ['BTCUSD', '0,72%', 'btc']
    ];

    const badges = {
      nas: '<span class="size-3 rounded-full bg-[#16a0b0] text-white text-[6px] leading-3 text-center font-bold">100</span>',
      btc: '<span class="size-3 rounded-full bg-[#e8952c] text-white text-[9px] leading-3 text-center font-bold">₿</span>'
    };

    document.getElementById('watchlist').innerHTML = symbols.map(([name, change, icon]) => {
      const color = change.startsWith('−') ? 'text-[#d42a45]' : 'text-[#2fa571]';
      const row = name === 'EURUSD' ? 'outline outline-[#9a9a9a] -outline-offset-1 rounded' : 'border-b border-[#2a2a2a]';
      const badge = badges[icon] || `<svg class="size-3 fill-none"><use href="#${icon}"/></svg>`;
      return `
        <tr class="h-5 ${row}">
          <td class="w-[25px]"><div class="flex items-center gap-px"><svg class="w-2 h-[9px]"><use href="#flag"/></svg>${badge}</div></td>
          <td class="text-[#e0e0e0]">${name}</td>
          <td class="text-right pr-2.5 ${color}">${change}</td>
        </tr>`;
    }).join('');

    const hours = [
      [57, '17'], [108, '06:00'], [159, '12:00'], [210, '18:00'], [261, '18'], [363, '12:00'], [414, '18:00'],
      [465, '19'], [516, '06:00'], [567, '12:00'], [618, '18:00'], [720, '06:00'], [763, '11:00'], [805, '22'],
      [873, '23'], [924, '06:00'], [975, '12:00'], [1026, '18:00']
    ];
    document.getElementById('hours').innerHTML = hours.map(([x, t]) => `<text x="${x}" y="655">${t}</text>`).join('');

    // closing levels along the session
    const track = [
      [37,385],[39,388],[43,377],[46,392],[50,397],[53,385],[59,383],[62,397],[65,417],[67,435],[72,420],[77,393],[80,384],
      [83,397],[86,380],[88,360],[93,357],[95,338],[97,358],[99,348],[101,359],[104,359],[107,367],[111,352],[115,366],
      [117,338],[120,355],[123,333],[125,315],[130,313],[136,333],[138,317],[142,317],[146,332],[151,335],[154,322],
      [161,327],[167,303],[169,293],[172,300],[177,305],[183,313],[190,305],[193,314],[200,313],[203,298],[210,305],
      [216,305],[220,300],[225,317],[232,315],[240,313],[243,318],[248,318],[260,303],[272,292],[274,290],[276,302],
      [279,299],[282,310],[284,328],[287,327],[290,340],[294,318],[297,332],[300,313],[304,298],[307,310],[311,300],
      [313,287],[316,318],[319,292],[323,313],[325,347],[329,367],[331,387],[333,367],[337,350],[340,363],[347,342],
      [352,338],[354,353],[357,343],[361,358],[364,370],[368,353],[373,350],[375,357],[377,395],[379,420],[385,427],
      [387,423],[390,447],[392,463],[396,470],[399,447],[403,440],[407,463],[410,465],[415,455],[418,450],[427,438],
      [430,427],[437,415],[439,420],[441,398],[445,398],[447,410],[455,425],[462,436],[469,437],[471,443],[475,430],
      [478,437],[485,442],[489,460],[492,472],[496,478],[499,463],[502,443],[504,442],[507,417],[511,432],[517,418],
      [520,435],[523,417],[528,442],[530,407],[535,400],[537,413],[540,347],[544,353],[546,368],[550,323],[553,363],
      [557,373],[559,330],[562,318],[567,311],[570,273],[573,267],[577,273],[582,277],[583,223],[585,173],[587,213],
      [590,223],[595,222],[598,215],[603,218],[608,228],[611,217],[614,230],[620,237],[628,239],[635,243],[637,237],
      [639,252],[645,258],[650,263],[653,262]
    ];
    // long wicks: x, high, low
    const wicks = [
      [66,400,441],[95,333,345],[90,346,360],[111,344,360],[117,335,367],[127,297,330],[133,304,335],[142,306,330],[151,330,344],
      [168,290,300],[203,296,310],[290,325,342],[312,270,300],[331,370,395],[337,328,360],[347,323,345],[371,331,352],
      [384,413,430],[402,435,450],[407,455,468],[442,394,415],[475,422,440],[484,425,465],[502,417,460],[505,400,440],
      [513,418,440],[520,412,442],[535,370,419],[537,390,434],[541,326,380],[545,340,375],[550,305,350],[554,350,377],
      [573,253,285],[581,265,280],[585,163,190],[586,169,225],[589,210,228],[609,202,230],[636,235,250]
    ];

    function levelAt(x) {
      for (let i = 1; i < track.length; i++) {
        const [x0, y0] = track[i - 1];
        const [x1, y1] = track[i];
        if (x <= x1) return y0 + (y1 - y0) * (x - x0) / (x1 - x0);
      }
      return track[track.length - 1][1];
    }

    let bars = '';
    const step = 2.13;
    for (let i = 0, x = 38; x < 654; i++, x += step) {
      const open = levelAt(x - step);
      const close = levelAt(x);
      const color = close < open ? '#2a4ae4' : '#06070f';
      const top = Math.min(open, close) - 1;
      const height = Math.max(Math.abs(open - close) + 2, 3);
      const up = (i * 7) % 5;
      const down = (i * 5) % 4;
      bars += `<path d="M${x} ${top - up}V${top + height + down}" stroke="${color}" stroke-width="0.8"/>`;
      bars += `<path d="M${x} ${top}v${height}" stroke="${color}" stroke-width="2"/>`;
    }
    wicks.forEach(([x, high, low], i) => {
      bars += `<path d="M${x} ${high}V${low}" stroke="${i % 3 ? '#2a4ae4' : '#06070f'}"/>`;
    });
    document.getElementById('candles-layer').innerHTML = bars;
  </script>
</body>
</html>
